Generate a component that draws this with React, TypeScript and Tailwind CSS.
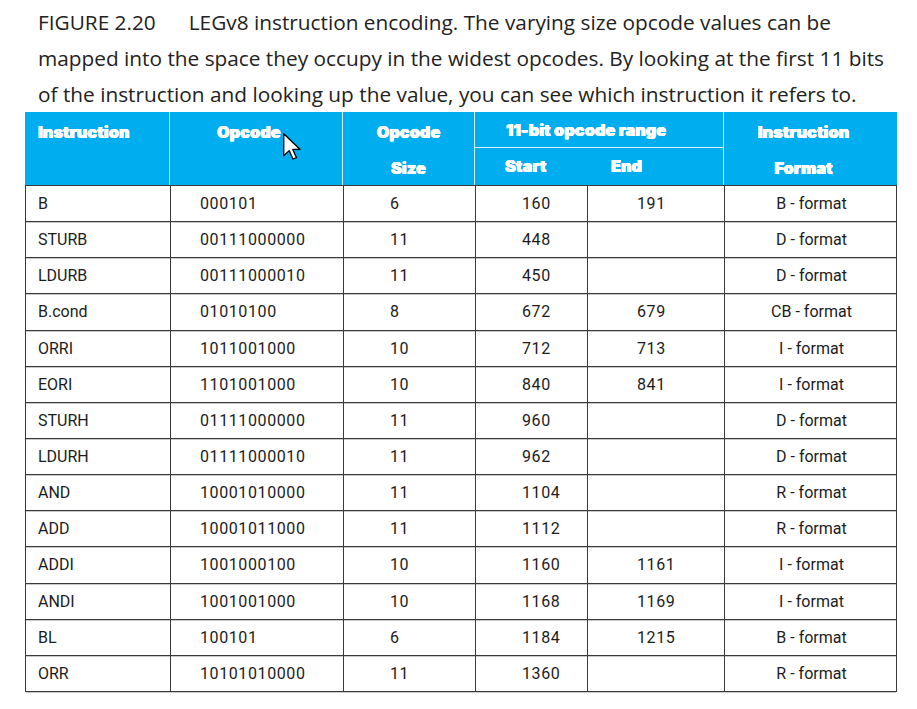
const rows: [string, string, string, string, string, string][] = [
  ['B', '000101', '6', '160', '191', 'B - format'],
  ['STURB', '00111000000', '11', '448', '', 'D - format'],
  ['LDURB', '00111000010', '11', '450', '', 'D - format'],
  ['B.cond', '01010100', '8', '672', '679', 'CB - format'],
  ['ORRI', '1011001000', '10', '712', '713', 'I - format'],
  ['EORI', '1101001000', '10', '840', '841', 'I - format'],
  ['STURH', '01111000000', '11', '960', '', 'D - format'],
  ['LDURH', '01111000010', '11', '962', '', 'D - format'],
  ['AND', '10001010000', '11', '1104', '', 'R - format'],
  ['ADD', '10001011000', '11', '1112', '', 'R - format'],
  ['ADDI', '1001000100', '10', '1160', '1161', 'I - format'],
  ['ANDI', '1001001000', '10', '1168', '1169', 'I - format'],
  ['BL', '100101', '6', '1184', '1215', 'B - format'],
  ['ORR', '10101010000', '11', '1360', '', 'R - format'],
];

const cols = 'grid grid-cols-[145px_173px_132px_112px_137px_173px]';
const head =
  "font-['Inter',sans-serif] font-black text-[16px] text-white tracking-[0.2px] [text-shadow:0.5px_0_0_#fff,-0.3px_0_0_#fff,0_0.4px_0_#fff]";

const Cursor = () => (
  <svg className="absolute left-[113px] top-[21px]" width="20" height="27" viewBox="0 0 14 19">
    <path d="M0.5 0.5 L0.5 16 L4.3 12.4 L7 18.3 L9.4 17.3 L6.8 11.6 L12 11.6 Z" fill="white" stroke="black" strokeWidth="0.9" strokeLinejoin="round" />
  </svg>
);

export default function App() {
  return (
    <div className="w-[917px] h-[709px] bg-white pl-[25px] pt-[4px]">
      <p className="pl-[13px] font-['Open_Sans',sans-serif] text-[20.8px] leading-[36px] text-[#222] whitespace-nowrap">
        <span className="mr-[33px]">FIGURE 2.20</span>LEGv8 instruction encoding. The varying size opcode values can be
        <br />
        mapped into the space they occupy in the widest opcodes. By looking at the first 11 bits
        <br />
        of the instruction and looking up the value, you can see which instruction it refers to.
      </p>

      <div className="w-[872px]">
        <div className={`${cols} grid-rows-[36px_37px] bg-[#00adef] ${head}`}>
          <div className="row-span-2 border-r border-[#d8f1fc] pl-[13px] pt-[2px] leading-[36px]">Instruction</div>
          <div className="relative row-span-2 border-r border-[#d8f1fc] pl-[47px] pt-[2px] leading-[36px]">
            Opcode
            <Cursor />
          </div>
          <div className="row-span-2 border-r border-[#d8f1fc] text-center pt-[2px] leading-[36px]">
            <div>Opcode</div>
            <div>Size</div>
          </div>
          <div className="col-span-2 border-r border-b border-[#d8f1fc] pl-[31px] pt-[2px] leading-[33px]">11-bit opcode range</div>
          <div className="row-span-2 text-center leading-[36px] pt-[2px] pr-[14px]">
            <div>Instruction</div>
            <div>Format</div>
          </div>
          <div className="col-start-4 row-start-2 pl-[30px] leading-[37px]">Start</div>
          <div className="col-start-5 row-start-2 border-r border-[#d8f1fc] pl-[24px] leading-[37px]">End</div>
        </div>

        <div className="border-l border-r border-t border-[#3a3a3a] font-['Roboto',sans-serif] text-[16px] text-[#1c1c1c]">
          {rows.map((r, i) => (
            <div
              key={i}
              className={`${cols} h-[36.15px] items-center border-b border-[#3a3a3a] shadow-[0_1px_0_#c9c9c9]`}
            >
              <div className="pl-[12px] pt-[1px] h-full flex items-center border-r border-[#3a3a3a]">{r[0]}</div>
              <div className="pl-[29px] pt-[1px] h-full flex items-center border-r border-[#3a3a3a] tracking-[0.6px]">{r[1]}</div>
              <div className="pl-[46px] pt-[1px] h-full flex items-center border-r border-[#3a3a3a] tracking-[0.6px]">{r[2]}</div>
              <div className="pl-[46px] pt-[1px] h-full flex items-center border-r border-[#3a3a3a] tracking-[0.6px]">{r[3]}</div>
              <div className="pl-[49px] pt-[1px] h-full flex items-center border-r border-[#3a3a3a] tracking-[0.6px]">{r[4]}</div>
              <div className="pt-[1px] h-full flex items-center justify-center">{r[5]}</div>
            </div>
          ))}
        </div>
      </div>
    </div>
  );
}
